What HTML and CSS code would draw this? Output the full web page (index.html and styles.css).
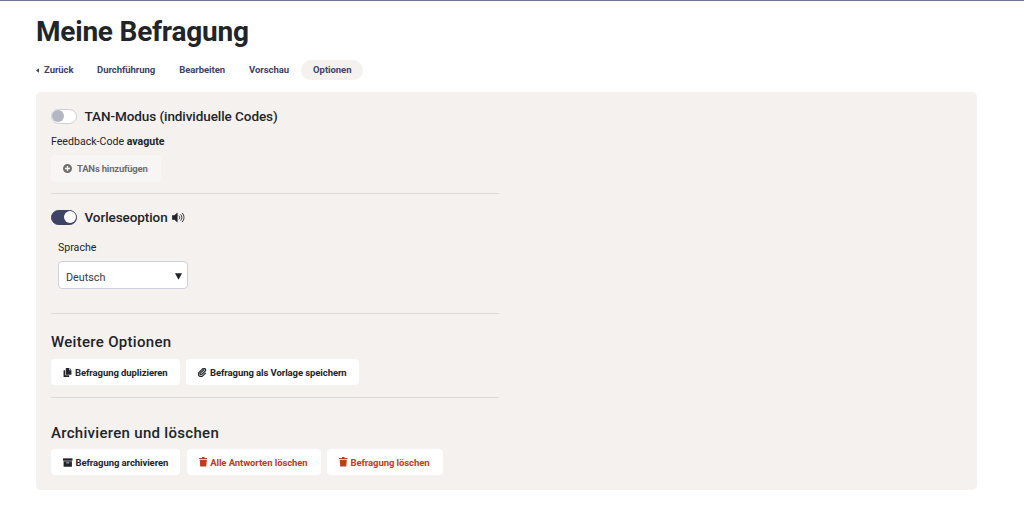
FILE: index.html
```html
<!DOCTYPE html>
<html lang="de">
<head>
<meta charset="utf-8">
<title>Meine Befragung</title>
<link rel="stylesheet" href="styles.css">
</head>
<body>
<main class="page">
  <h1 class="title">Meine Befragung</h1>
  <nav class="tabs">
    <a class="tab back"><svg class="caret" viewBox="0 0 4 6"><path d="M4 0v6L0 3z"/></svg>Zurück</a>
    <a class="tab">Durchführung</a>
    <a class="tab">Bearbeiten</a>
    <a class="tab">Vorschau</a>
    <a class="tab active">Optionen</a>
  </nav>
  <section class="panel">
    <div class="block block-tan">
      <div class="toggle-row">
        <span class="switch"><span class="knob"></span></span>
        <h2 class="toggle-title">TAN-Modus (individuelle Codes)</h2>
      </div>
      <p class="code">Feedback-Code <b>avagute</b></p>
      <button class="btn disabled"><svg class="ico" viewBox="0 0 16 16"><path fill-rule="evenodd" d="M8 0a8 8 0 1 1 0 16A8 8 0 0 1 8 0zM6.800 3.500v3.300H3.500v2.400h3.300v3.300h2.400V9.200h3.300V6.800H9.200V3.500z"/></svg>TANs hinzufügen</button>
    </div>
    <div class="block block-read">
      <div class="toggle-row">
        <span class="switch on"><span class="knob"></span></span>
        <h2 class="toggle-title">Vorleseoption</h2>
        <svg class="speaker" viewBox="0 0 14 12"><path d="M0 3.500h2.500L6 .5v11l-3.500-3H0z"/><path d="M7.500 4c1 1 1 3 0 4M9.300 2.600c1.800 2 1.800 4.800 0 6.800M11 1c2.600 3 2.600 7 0 10" fill="none" stroke="currentColor" stroke-width="1"/></svg>
      </div>
      <label class="lang">
        <span class="lang-label">Sprache</span>
        <span class="select">Deutsch<svg class="arrow" viewBox="0 0 10 9"><path d="M0 0h10L5 9z"/></svg></span>
      </label>
    </div>
    <div class="block block-more">
      <h2 class="heading">Weitere Optionen</h2>
      <div class="actions">
        <button class="btn"><svg class="ico" viewBox="0 0 14 16"><path d="M4 0h6v4h4v8H4z"/><path d="M11 0l3 3h-3z"/><path d="M0 4h3v9h7v3H0z"/></svg>Befragung duplizieren</button>
        <button class="btn"><svg class="ico" viewBox="0 0 16 16"><path d="M11 2.500 4 9.500a1.600 1.600 0 0 0 2.300 2.300l6.500-6.500a3 3 0 0 0-4.200-4.200L2 7.700a4.500 4.500 0 0 0 6.400 6.400l5.500-5.500" fill="none" stroke="currentColor" stroke-width="2.200"/></svg>Befragung als Vorlage speichern</button>
      </div>
    </div>
    <div class="block block-last">
      <h2 class="heading">Archivieren und löschen</h2>
      <div class="actions">
        <button class="btn"><svg class="ico wide" viewBox="0 0 16 14"><path d="M0 0h16v4H0z"/><path fill-rule="evenodd" d="M1 5h14v9H1zM5.500 7v1.400h5V7z"/></svg>Befragung archivieren</button>
        <button class="btn danger"><svg class="ico trash" viewBox="0 0 14 16"><path d="M0 1.500h4.500L5.300 0h3.400l.8 1.500H14v2H0z"/><path d="M1 4.500h12l-.9 11.500H1.900z"/></svg>Alle Antworten löschen</button>
        <button class="btn danger"><svg class="ico trash" viewBox="0 0 14 16"><path d="M0 1.500h4.500L5.300 0h3.400l.8 1.500H14v2H0z"/><path d="M1 4.500h12l-.9 11.500H1.900z"/></svg>Befragung löschen</button>
      </div>
    </div>
  </section>
</main>
</body>
</html>
```

FILE: styles.css
```css
* { box-sizing: border-box; }
html, body { margin: 0; padding: 0; background: #fff; }
body {
  border-top: 1px solid #6f7396;
  height: 521px;
  overflow: hidden;
  font-family: "Roboto", "Liberation Sans", sans-serif;
  color: #212529;
}
.page { width: 941px; margin-left: 36px; }
.title {
  margin: 0;
  padding-top: 14px;
  height: 59px;
  font-size: 28px;
  line-height: 34px;
  font-weight: 700;
  letter-spacing: -.22px;
}
.tabs { display: flex; height: 20px; align-items: center; }
.tab {
  font-size: 9.500px;
  font-weight: 700;
  line-height: 20px;
  letter-spacing: -.05px;
  color: #3d4266;
  padding: 0 12px;
  border-radius: 10px;
}
.back { padding: 0; margin-right: 11.500px; display: flex; align-items: center; }
.caret { width: 3px; height: 5px; margin-right: 5px; fill: #3d4266; }
.active { background: #f4f1ee; }
.panel {
  margin-top: 12px;
  height: 398px;
  background: #f4f1ee;
  border-radius: 5px;
  padding: 14px 15px;
}
.block { width: 448px; }
.block-tan { height: 88px; border-bottom: 1px solid #dedbd9; }
.block-read { height: 120px; padding-top: 13px; border-bottom: 1px solid #dedbd9; }
.block-more { height: 84px; padding-top: 18px; border-bottom: 1px solid #dedbd9; }
.block-last { padding-top: 25px; }
.block-last .actions { margin-top: 6px; }
.toggle-row { display: flex; align-items: center; height: 20px; }
.switch {
  width: 26px;
  height: 15px;
  border-radius: 8px;
  background: #fff;
  border: 1px solid #cfcfd6;
  display: flex;
  align-items: center;
  margin-right: 7.500px;
}
.knob { width: 12px; height: 12px; border-radius: 50%; background: #b3b7c2; }
.switch.on { background: #3d4266; border-color: #3d4266; justify-content: flex-end; }
.switch.on .knob { background: #fff; }
.toggle-title { margin: 0; font-size: 13.500px; line-height: 20px; font-weight: 500; letter-spacing: -.07px; }
.speaker { width: 13px; height: 11px; margin-left: 4px; fill: currentColor; }
.code { margin: 8px 0 0; font-size: 10.600px; line-height: 16px; }
.code b { font-weight: 700; }
.btn {
  display: inline-flex;
  align-items: center;
  height: 26px;
  border: 0;
  border-radius: 4px;
  background: #fff;
  padding: 0 12px;
  font-family: inherit;
  font-size: 9.500px;
  font-weight: 700;
  letter-spacing: -.08px;
  color: #212529;
}
.ico { width: 9px; height: 9px; margin-right: 3px; fill: currentColor; flex: none; }
.wide { width: 9.500px; }
.trash { width: 8.500px; height: 9.500px; }
.disabled {
  margin-top: 5px;
  height: 27px;
  padding-right: 13px;
  background: #f7f6f4;
  color: #6f6f6f;
  letter-spacing: -.2px;
}
.disabled .ico { margin-right: 5px; }
.lang { display: block; padding: 0 7px; margin-top: 13px; }
.lang-label { display: block; font-size: 10.600px; line-height: 16px; }
.select {
  margin-top: 5px;
  width: 130px;
  height: 28px;
  background: #fff;
  border: 1px solid #cdd0e0;
  border-radius: 4px;
  display: flex;
  align-items: center;
  justify-content: space-between;
  padding: 5px 5px 0 7px;
  font-size: 10.800px;
  color: #343a40;
}
.arrow { width: 7px; height: 7px; margin-bottom: 3px; fill: #212529; }
.heading { margin: 0; font-size: 15px; line-height: 20px; font-weight: 500; letter-spacing: .3px; }
.actions { display: flex; gap: 6.400px; margin-top: 7px; }
.danger { color: #b8401f; padding-right: 13px; }
```
